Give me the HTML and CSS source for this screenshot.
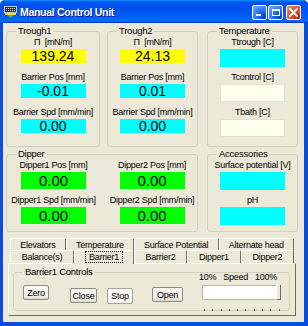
FILE: index.html
```html
<!DOCTYPE html>
<html>
<head>
<meta charset="utf-8">
<link rel="stylesheet" href="styles.css">
</head>
<body>
<div class="window">
  <div class="titlebar">
    <svg class="appicon" width="13" height="12" viewBox="0 0 13 12">
      <rect x="0.5" y="0.5" width="12" height="6" fill="#2a2a3a" stroke="#c8c8d8"/>
      <g fill="#ffffff">
        <rect x="2" y="2" width="1" height="1"/><rect x="4" y="2" width="1" height="1"/><rect x="6" y="2" width="1" height="1"/><rect x="8" y="2" width="1" height="1"/><rect x="10" y="2" width="1" height="1"/>
        <rect x="2" y="4" width="1" height="1"/><rect x="4" y="4" width="1" height="1"/><rect x="6" y="4" width="1" height="1"/><rect x="8" y="4" width="1" height="1"/><rect x="10" y="4" width="1" height="1"/>
      </g>
      <rect x="1" y="7" width="11" height="2" fill="#f0e020"/>
      <path d="M3 9 L10 9 L6.5 12 Z" fill="#40c040"/>
    </svg>
    <span class="title">Manual Control Unit</span>
    <div class="tbtns">
      <span class="tb min"><span class="minbar"></span></span>
      <span class="tb max"><span class="maxbox"></span></span>
      <span class="tb close">
        <svg width="9" height="9" viewBox="0 0 9 9"><path d="M1 1 L8 8 M8 1 L1 8" stroke="#fff" stroke-width="1.8" stroke-linecap="round"/></svg>
      </span>
    </div>
  </div>
  <div class="client">
    <div class="row row1">
      <fieldset class="grp trough t1">
        <legend>Trough1</legend>
        <div class="col">
          <div class="lbl">Π&nbsp; [mN/m]</div>
          <div class="val yel">139.24</div>
          <div class="lbl">Barrier Pos [mm]</div>
          <div class="val cyan">-0.01</div>
          <div class="lbl">Barrier Spd [mm/min]</div>
          <div class="val cyan">0.00</div>
        </div>
      </fieldset>
      <fieldset class="grp trough t2">
        <legend>Trough2</legend>
        <div class="col">
          <div class="lbl">Π&nbsp; [mN/m]</div>
          <div class="val yel">24.13</div>
          <div class="lbl">Barrier Pos [mm]</div>
          <div class="val cyan">0.01</div>
          <div class="lbl">Barrier Spd [mm/min]</div>
          <div class="val cyan">0.00</div>
        </div>
      </fieldset>
      <fieldset class="grp temp">
        <legend>Temperature</legend>
        <div class="col">
          <div class="lbl">Ttrough [C]</div>
          <div class="val tall cyan"></div>
          <div class="lbl">Tcontrol [C]</div>
          <div class="val tall cream"></div>
          <div class="lbl">Tbath [C]</div>
          <div class="val tall cream"></div>
        </div>
      </fieldset>
    </div>
    <div class="row row2">
      <fieldset class="grp dipper">
        <legend>Dipper</legend>
        <div class="dcols">
          <div class="col dc1">
            <div class="lbl">Dipper1 Pos [mm]</div>
            <div class="val mid green">0.00</div>
            <div class="lbl">Dipper1 Spd [mm/min]</div>
            <div class="val mid green">0.00</div>
          </div>
          <div class="col dc2">
            <div class="lbl">Dipper2 Pos [mm]</div>
            <div class="val mid green">0.00</div>
            <div class="lbl">Dipper2 Spd [mm/min]</div>
            <div class="val mid green">0.00</div>
          </div>
        </div>
      </fieldset>
      <fieldset class="grp acc">
        <legend>Accessories</legend>
        <div class="col">
          <div class="lbl">Surface potential [V]</div>
          <div class="val tall cyan"></div>
          <div class="lbl">pH</div>
          <div class="val tall cyan"></div>
        </div>
      </fieldset>
    </div>
    <div class="tabs">
      <div class="tabrow back">
        <div class="tab">Elevators</div>
        <div class="tab">Temperature</div>
        <div class="tab">Surface Potential</div>
        <div class="tab">Alternate head</div>
      </div>
      <div class="tabrow front">
        <div class="tab">Balance(s)</div>
        <div class="tab sel"><span class="focus">Barrier1</span></div>
        <div class="tab">Barrier2</div>
        <div class="tab">Dipper1</div>
        <div class="tab">Dipper2</div>
      </div>
      <div class="panel">
        <fieldset class="grp ctl">
          <legend>Barrier1 Controls</legend>
          <div class="ctlrow">
            <button class="btn b-zero">Zero</button>
            <button class="btn b-close">Close</button>
            <button class="btn b-stop">Stop</button>
            <button class="btn b-open">Open</button>
            <div class="speed">
              <div class="speedlbls"><span>10%</span><span>Speed</span><span>100%</span></div>
              <div class="track"><div class="thumb"></div></div>
              <div class="ticks"></div>
            </div>
          </div>
        </fieldset>
      </div>
    </div>
  </div>
</div>
</body>
</html>
```
FILE: styles.css
```css
* { box-sizing: border-box; }
html, body { margin: 0; padding: 0; background: #ffffff; }
body {
  width: 308px; height: 326px; overflow: hidden;
  font-family: "Liberation Sans", Arial, sans-serif;
  font-size: 9px; letter-spacing: -0.25px; color: #000;
}
.window {
  width: 308px; height: 326px;
  display: flex; flex-direction: column;
  background: #0B4BDD;
  border-radius: 5px 5px 0 0;
  overflow: hidden;
}
.titlebar {
  height: 23px; flex: none;
  display: flex; align-items: center;
  padding: 0 7px 0 4px;
  background: linear-gradient(180deg, #0997ff, #0053ee 8%, #0050ee 40%, #06f 88%, #06f 93%, #005bff 95%, #003dd7 96%, #003dd7);
}
.appicon { flex: none; margin-right: 3px; margin-top: 1px; }
.title {
  flex: 1;
  color: #fff; font-weight: bold; font-size: 10.5px;
  letter-spacing: -0.3px;
  text-shadow: 1px 1px 0 #0a1883;
}
.tbtns { display: flex; gap: 1px; margin-top: 2px; }
.tb {
  width: 15px; height: 15px;
  border: 1px solid #fff; border-radius: 2px;
  display: flex; align-items: center; justify-content: center;
  position: relative;
}
.tb.min, .tb.max {
  background: radial-gradient(circle at 85% 85%, #0040c0, #2a6ff7 45%, #5d98ff 80%, #8fbcff);
}
.tb.close {
  margin-left: 2px;
  background: radial-gradient(circle at 90% 90%, #b02c10, #d94e2c 45%, #e8805f 85%, #f0a38a);
}
.minbar { width: 5px; height: 2px; background: #fff; position: absolute; left: 3px; bottom: 3px; }
.maxbox { width: 8px; height: 7px; border: 1px solid #fff; border-top-width: 2px; }

.client {
  flex: 1;
  margin: 0 4px 4px 3px;
  background: #ECE9D8;
  padding: 2px 0 0 3px;
}
.row { display: flex; }
.grp {
  margin: 0; padding: 0;
  border: 1px solid #D0D0BF; border-radius: 3px;
  min-width: 0;
}
legend {
  padding: 0 2px; margin-left: 9px;
  line-height: 12px; font-size: 9.5px;
}
.col { display: flex; flex-direction: column; align-items: center; }
.lbl {
  height: 11px; line-height: 11px;
  margin-bottom: 1px;
  white-space: nowrap; text-align: center;
}
.val {
  width: 65px; height: 14px;
  font-family: "Liberation Sans", Arial, sans-serif;
  font-size: 14px; line-height: 15px; letter-spacing: 0;
  text-align: center;
  margin-bottom: 9px;
}
.val.tall { height: 18px; margin-bottom: 5px; }
.val.mid { height: 17px; line-height: 18px; font-size: 15px; margin-bottom: 6px; }
.yel { background: #FFFF00; }
.cyan { background: #00FFFF; }
.green { background: #00FF00; }
.cream { background: #FFFFEE; border: 1px solid #E4E2D2; }

.row1 .grp { height: 122px; }
.t1 { width: 94px; }
.t2 { width: 91px; margin-left: 7px; }
.temp { width: 91px; margin-left: 9px; }
.row2 { margin-top: 1px; }
.row2 .grp { height: 84px; }
.dipper { width: 192px; }
.acc { width: 91px; margin-left: 9px; }
.dcols { display: flex; gap: 7px; }
.dc1 { width: 93px; }
.dc2 { width: 90px; }

.tabs { margin: 6px 0 0 2px; width: 288px; }
.tabrow { display: flex; padding: 0 2px; }
.tab {
  flex: 1 1 auto;
  text-align: center; white-space: nowrap;
  padding: 0 4px;
  border-top: 1px solid #fff;
  border-left: 1px solid #fff;
  border-right: 1px solid #716F64;
  border-radius: 2px 2px 0 0;
}
.back { height: 13px; line-height: 12px; margin-top: 2px; }
.front { height: 13px; line-height: 12px; margin-top: -1px; position: relative; z-index: 1; }
.front .tab.sel { background: #ECE9D8; margin-bottom: -1px; height: 14px; }
.focus {
  outline: 1px dotted #000; outline-offset: 0px;
  padding: 0 3px;
}
.panel {
  height: 53px;
  border-top: 1px solid #fff;
  border-left: 1px solid #fff;
  border-right: 1px solid #716F64;
  border-bottom: 1px solid #716F64;
  padding: 2px 5px 0 4px;
}
.ctl { height: 45px; }
.ctlrow { display: flex; align-items: flex-start; }
.btn {
  font-family: "Liberation Sans", Arial, sans-serif;
  font-size: 9px; letter-spacing: -0.2px; color: #000;
  height: 15px; padding: 0;
  border: 1px solid #8F8C80; border-radius: 2px;
  background: linear-gradient(180deg, #fbfbf8, #efede4 80%, #dcd8cb);
  margin-top: 9px;
}
.b-zero { width: 26px; margin-left: 9px; margin-top: 7px; }
.b-close { width: 27px; margin-left: 21px; margin-top: 10px; }
.b-stop { width: 26px; margin-left: 10px; margin-top: 10px; height: 16px; background: linear-gradient(180deg, #ffffff, #f6f5f0); border-color: #A7A596; }
.b-open { width: 31px; margin-left: 19px; }
.speed { margin-left: 16px; width: 82px; margin-top: -6px; }
.speedlbls { display: flex; justify-content: space-between; line-height: 11px; padding: 0 4px 0 0; }
.track {
  margin: 2px 0 0 3px; width: 79px; height: 15px;
  background: #fff;
  border: 1px solid #B9B6A8;
  position: relative;
}
.thumb {
  position: absolute; right: -1px; top: -1px;
  width: 5px; height: 15px;
  background: #ECE9D8;
  border-right: 1px solid #716F64; border-bottom: 1px solid #716F64;
  border-left: 1px solid #fff;
}
.ticks {
  margin: 9px 0 0 5px; width: 76px; height: 2px;
  background: repeating-linear-gradient(90deg, #6b6a60 0 1px, transparent 1px 8.3px);
}
```
